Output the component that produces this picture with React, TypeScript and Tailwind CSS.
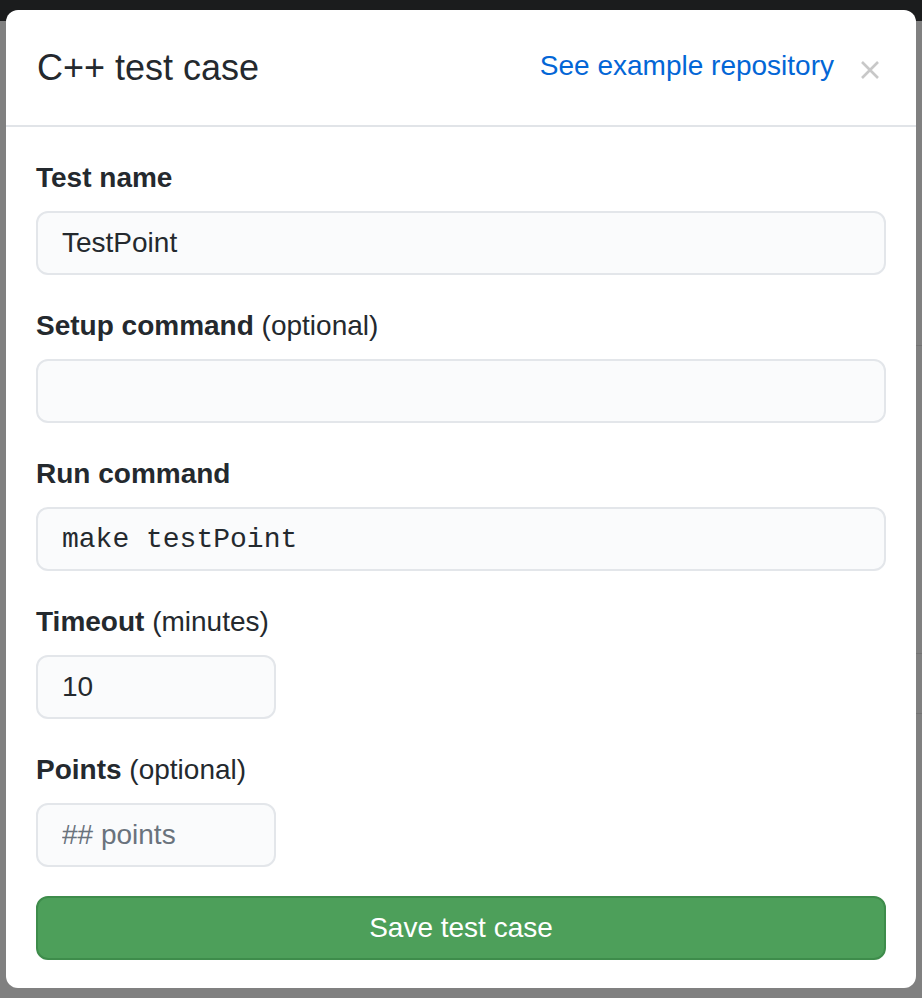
import React from "react";

const sans = { fontFamily: '"Liberation Sans", Arial, sans-serif' };

function Field({
  label,
  hint,
  value,
  placeholder,
  mono,
  narrow,
}: {
  label: string;
  hint?: string;
  value?: string;
  placeholder?: string;
  mono?: boolean;
  narrow?: boolean;
}) {
  return (
    <div className="flex flex-col gap-[12px]">
      <label className="h-[42px] leading-[42px] text-[28px] text-[#24292e]">
        <span className="font-bold">{label}</span>
        {hint && <span> {hint}</span>}
      </label>
      <input
        readOnly
        value={value ?? ""}
        placeholder={placeholder}
        className={`h-[64px] ${narrow ? "w-[240px]" : "w-full"} rounded-[12px] border-2 border-[#e3e6ea] bg-[#fafbfc] px-[24px] text-[28px] text-[#24292e] placeholder:text-[#6a737d] outline-none`}
        style={mono ? { fontFamily: '"Liberation Mono", "Courier New", monospace' } : sans}
      />
    </div>
  );
}

export default function App() {
  return (
    <div className="relative flex h-[998px] w-[922px] flex-col overflow-hidden bg-[#808080]" style={sans}>
      {/* page behind the overlay */}
      <div className="h-[21px] bg-[#1b1c1d]" />
      <div className="flex flex-1 justify-end">
        <div className="flex w-[6px] flex-col pt-[324px]">
          <div className="h-px bg-[#737373]" />
          <div className="h-[307px]" />
          <div className="h-px bg-[#737373]" />
          <div className="h-[59px]" />
          <div className="h-px bg-[#737373]" />
        </div>
      </div>

      {/* modal */}
      <div className="absolute left-[6px] top-[10px] w-[910px] rounded-[12px] bg-white">
        <div className="flex h-[117px] items-center justify-between border-b-2 border-[#e1e4e8] pl-[31px] pr-[36px]">
          <h3 className="text-[36px] font-normal text-[#24292e]">C++ test case</h3>
          <div className="flex items-center gap-[26px]">
            <a className="-mt-[3px] text-[28px] text-[#0366d6]" href="#">
              See example repository
            </a>
            <svg width="20" height="20" viewBox="0 0 20 20" className="mt-[4px]">
              <path d="M2 2L18 18M18 2L2 18" stroke="#c8c8c8" strokeWidth="2.6" />
            </svg>
          </div>
        </div>

        <div className="flex flex-col gap-[30px] px-[30px] pt-[30px] pb-[28px]">
          <Field label="Test name" value="TestPoint" />
          <Field label="Setup command" hint="(optional)" />
          <Field label="Run command" value="make testPoint" mono />
          <Field label="Timeout" hint="(minutes)" value="10" narrow />
          <Field label="Points" hint="(optional)" placeholder="## points" narrow />
          <button className="-mt-[1px] h-[64px] w-full rounded-[12px] border-2 border-[#3e8c4b] bg-[#4d9f5a] text-[28px] text-white">
            Save test case
          </button>
        </div>
      </div>
    </div>
  );
}
